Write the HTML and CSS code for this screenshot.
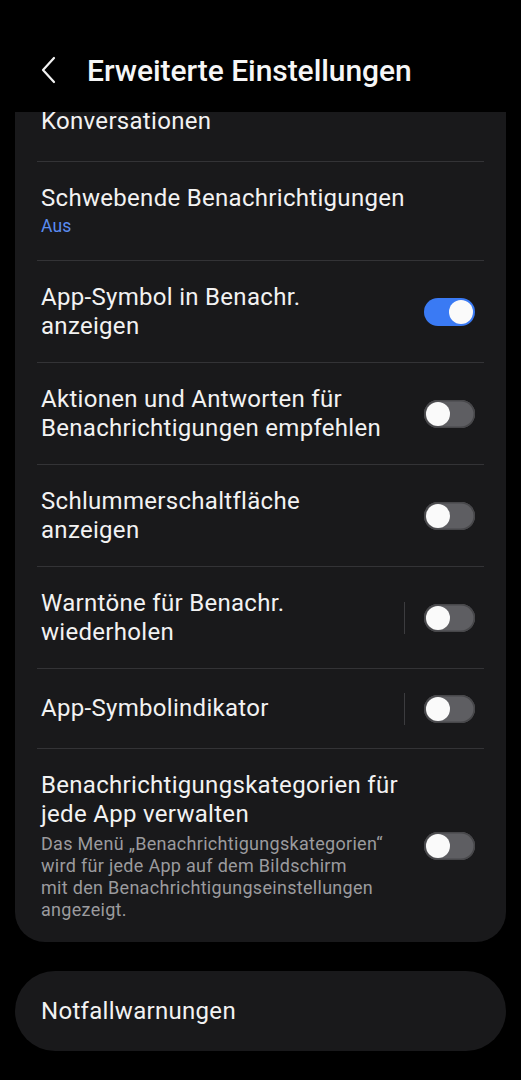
FILE: index.html
```html
<!DOCTYPE html>
<html lang="de">
<head>
<meta charset="utf-8">
<link rel="stylesheet" href="styles.css">
</head>
<body>
<div class="screen">
  <header class="topbar">
    <svg class="back" width="20" height="30" viewBox="0 0 20 30"><path d="M15 3 L4 15 L15 27" fill="none" stroke="#f2f2f2" stroke-width="2.2" stroke-linecap="round" stroke-linejoin="round"/></svg>
    <h1 class="title">Erweiterte Einstellungen</h1>
  </header>
  <div class="viewport">
    <section class="card main">
      <div class="row first"><div class="text"><div class="label">Konversationen</div></div></div>
      <div class="row"><div class="text"><div class="label">Schwebende Benachrichtigungen</div><div class="sub">Aus</div></div></div>
      <div class="row"><div class="text"><div class="label">App-Symbol in Benachr.<br>anzeigen</div></div><span class="switch on"></span></div>
      <div class="row"><div class="text"><div class="label">Aktionen und Antworten für<br>Benachrichtigungen empfehlen</div></div><span class="switch"></span></div>
      <div class="row"><div class="text"><div class="label">Schlummerschaltfläche<br>anzeigen</div></div><span class="switch"></span></div>
      <div class="row"><div class="text"><div class="label">Warntöne für Benachr.<br>wiederholen</div></div><span class="vsep"></span><span class="switch"></span></div>
      <div class="row"><div class="text"><div class="label">App-Symbolindikator</div></div><span class="vsep"></span><span class="switch"></span></div>
      <div class="row last"><div class="text"><div class="label">Benachrichtigungskategorien für<br>jede App verwalten</div><div class="desc">Das Menü „Benachrichtigungskategorien“<br>wird für jede App auf dem Bildschirm<br>mit den Benachrichtigungseinstellungen<br>angezeigt.</div></div><span class="switch"></span></div>
    </section>
    <section class="card pill">
      <div class="row single"><div class="text"><div class="label">Notfallwarnungen</div></div></div>
    </section>
  </div>
</div>
</body>
</html>
```
FILE: styles.css
```css
* { box-sizing: border-box; }
html, body { margin: 0; padding: 0; background: #000; }
body { font-family: Roboto, "Noto Sans", sans-serif; color: #f4f4f4; }
.screen { width: 521px; height: 1080px; overflow: hidden; }
.topbar { height: 112px; display: flex; align-items: center; padding: 0 0 0 39px; padding-top: 28px; gap: 28px; }
.back { display: block; }
.title { margin: 0; font-size: 30px; font-weight: 500; letter-spacing: -0.05px; color: #f6f6f6; }
.viewport { height: 968px; overflow: hidden; padding: 4px 15px 0; }
.card { background: #19191b; border-radius: 30px; padding: 0 22px; }
.row { display: flex; align-items: center; min-height: 80px; padding: 21.5px 4px; border-top: 1px solid #333336; }
.row.first { border-top: none; margin-top: -35px; }
.text { flex: 1; min-width: 0; }
.label { font-size: 24px; line-height: 29px; letter-spacing: 0.3px; color: #f2f2f2; }
.sub { font-size: 17.5px; line-height: 26px; letter-spacing: 0.2px; color: #5b8cf0; }
.desc { font-size: 18px; line-height: 22px; letter-spacing: 0.3px; color: #9b9b9e; margin-top: 4px; }
.vsep { width: 1px; height: 32px; background: #3c3c3f; margin-right: 19px; }
.switch { position: relative; width: 51px; height: 28px; border-radius: 14px; background: #5e5e62; box-shadow: inset 0 0 0 1.5px #47474a; flex: none; margin-right: 5px; }
.switch::after { content: ""; position: absolute; top: 2px; left: 2px; width: 24px; height: 24px; border-radius: 50%; background: #fafafa; }
.switch.on { background: #3a7af4; box-shadow: none; }
.switch.on::after { left: 25px; }
.pill { margin-top: 29px; border-radius: 40px; }
.pill .row { border-top: none; min-height: 80px; padding: 0 4px; }
```
